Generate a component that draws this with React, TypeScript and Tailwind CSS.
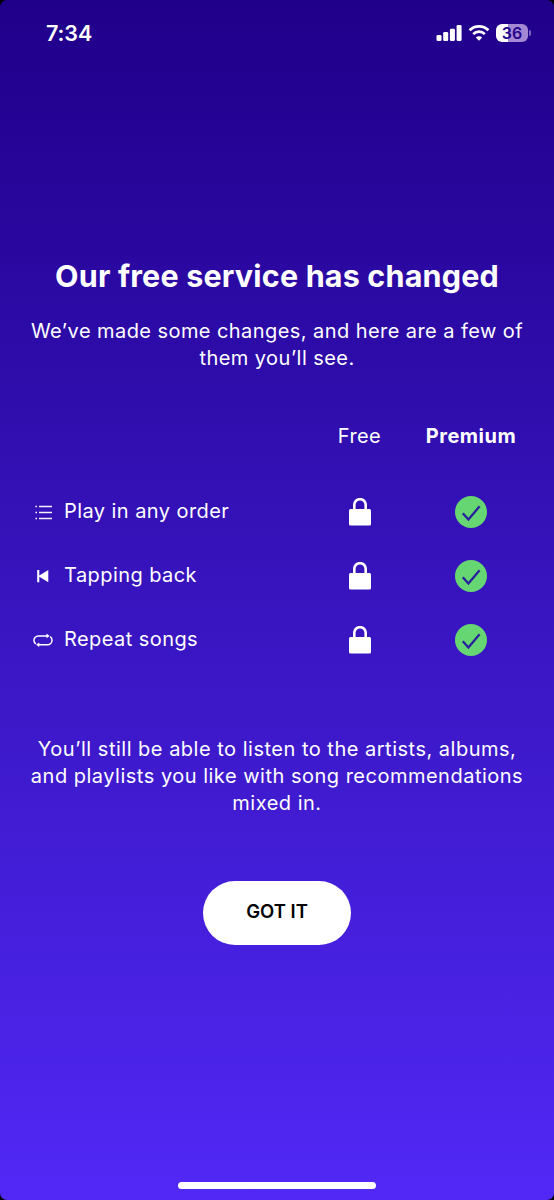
import type { ReactNode } from "react";

interface Feature {
  label: string;
  icon: ReactNode;
}

function ListIcon() {
  return (
    <svg width="20" height="20" viewBox="0 0 20 20" className="text-white/95">
      <path d="M6 4.5h13M6 10.5h13M6 16.5h13" stroke="currentColor" strokeWidth="1.4" />
      <path d="M2.4 4.5h1.6M2.4 10.5h1.6M2.4 16.5h1.6" stroke="currentColor" strokeWidth="1.4" />
    </svg>
  );
}

function PreviousIcon() {
  return (
    <svg width="20" height="20" viewBox="0 0 20 20" fill="white">
      <path d="M4.2 4h2.1v5.4L15.3 4v12.2l-9-5.4v5.4H4.2z" />
    </svg>
  );
}

function RepeatIcon() {
  return (
    <svg width="20" height="20" viewBox="0 0 20 20" fill="none" stroke="white" strokeWidth="1.5">
      <path d="M2.9 13.8C1.6 13 .9 11.8.9 10.3a4.4 4.4 0 0 1 4.4-4.4h9.7" />
      <path d="M17.1 6.7c1.2.8 1.9 2 1.9 3.5a4.5 4.5 0 0 1-4.5 4.5H5.2" />
      <path d="M13.8 4.2 16.2 5.9l-2.4 1.7zM6 13l-2.4 1.7L6 16.4z" fill="white" strokeWidth=".7" />
    </svg>
  );
}

function LockIcon() {
  return (
    <svg width="22" height="28" viewBox="0 0 22 28">
      <path d="M5.3 13V6.8a5.7 5.7 0 0 1 11.4 0V13" fill="none" stroke="white" strokeWidth="2.6" />
      <rect y="11" width="22" height="16.5" rx="1.5" fill="white" />
    </svg>
  );
}

function CheckIcon() {
  return (
    <svg width="32" height="32" viewBox="0 0 32 32">
      <circle cx="16" cy="16" r="16" fill="#66d672" />
      <path d="M7.8 17.2 13.4 23.4 24.6 10.3" fill="none" stroke="#29209b" strokeWidth="2.3" />
    </svg>
  );
}

function StatusBar() {
  return (
    <div className="flex h-[66px] items-center justify-between pr-[23px] pl-[46px]">
      <span className="pt-[2px] text-[21.5px] leading-none font-semibold tracking-[-0.1px]">7:34</span>
      <div className="flex items-center gap-[6px]">
        <svg width="26" height="18" viewBox="0 0 26 18" fill="white">
          <rect x=".5" y="11" width="5" height="6" rx="1.3" />
          <rect x="7.2" y="8" width="5" height="9" rx="1.3" />
          <rect x="13.9" y="4.7" width="5" height="12.3" rx="1.3" />
          <rect x="20.6" y="1" width="5" height="16" rx="1.3" />
        </svg>
        <svg width="22" height="18" viewBox="0 0 22 18" fill="none" stroke="white">
          <path d="M1.6 6.3a13.3 13.3 0 0 1 18.8 0" strokeWidth="2.9" />
          <path d="M5.2 10.1a8.2 8.2 0 0 1 11.6 0" strokeWidth="2.7" />
          <path d="M11 16.8 7.8 13.5a4.6 4.6 0 0 1 6.4 0z" fill="white" stroke="none" />
        </svg>
        <div className="flex items-center gap-[1px]">
          <div className="flex h-[18px] w-[32px] items-center justify-center rounded-[6px] bg-linear-to-r from-white from-36% to-[#a488d3] to-36% text-[16px] leading-none font-semibold text-[#23028c]">
            36
          </div>
          <div className="h-[6px] w-[2px] rounded-r-full bg-[#8264bd]" />
        </div>
      </div>
    </div>
  );
}

const features: Feature[] = [
  { label: "Play in any order", icon: <ListIcon /> },
  { label: "Tapping back", icon: <PreviousIcon /> },
  { label: "Repeat songs", icon: <RepeatIcon /> },
];

export default function App() {
  return (
    <div className="h-[1200px] w-[554px] bg-black">
      <main className="flex h-full flex-col overflow-hidden rounded-[7px] bg-linear-to-b from-[#20008a] to-[#5128f6] font-['Inter',sans-serif] text-white">
        <StatusBar />

        <section className="mt-[190px] text-center">
          <h1 className="text-[30.5px] leading-[40px] font-bold tracking-[0.18px] whitespace-nowrap">
            Our free service has changed
          </h1>
          <p className="mt-[22px] text-[20px] leading-[27px] tracking-[0.43px] whitespace-nowrap">
            We’ve made some changes, and here are a few of
            <br />
            them you’ll see.
          </p>
        </section>

        <section className="mt-[49px] pl-[33px]">
          <div className="grid h-[30px] grid-cols-[271px_111px_112px] items-center text-center text-[20px]">
            <span />
            <span className="tracking-[0.4px]">Free</span>
            <span className="font-bold tracking-[0.5px]">Premium</span>
          </div>
          <div className="mt-[29px]">
            {features.map((feature) => (
              <div key={feature.label} className="grid h-[64.2px] grid-cols-[271px_111px_112px] items-center">
                <div className="flex items-center gap-[11px] text-[20px] tracking-[0.43px]">
                  {feature.icon}
                  <span className="-mt-[2px]">{feature.label}</span>
                </div>
                <div className="flex justify-center">
                  <LockIcon />
                </div>
                <div className="flex justify-center">
                  <CheckIcon />
                </div>
              </div>
            ))}
          </div>
        </section>

        <p className="mt-[63px] text-center text-[20px] leading-[27px] tracking-[0.5px] whitespace-nowrap">
          You’ll still be able to listen to the artists, albums,
          <br />
          and playlists you like with song recommendations
          <br />
          mixed in.
        </p>

        <button className="mt-[64px] h-[64px] w-[148px] self-center rounded-full bg-white pb-[2px] text-[18.5px] font-semibold text-black">
          GOT IT
        </button>

        <div className="mt-auto mb-[11px] h-[7px] w-[198px] self-center rounded-full bg-white" />
      </main>
    </div>
  );
}
